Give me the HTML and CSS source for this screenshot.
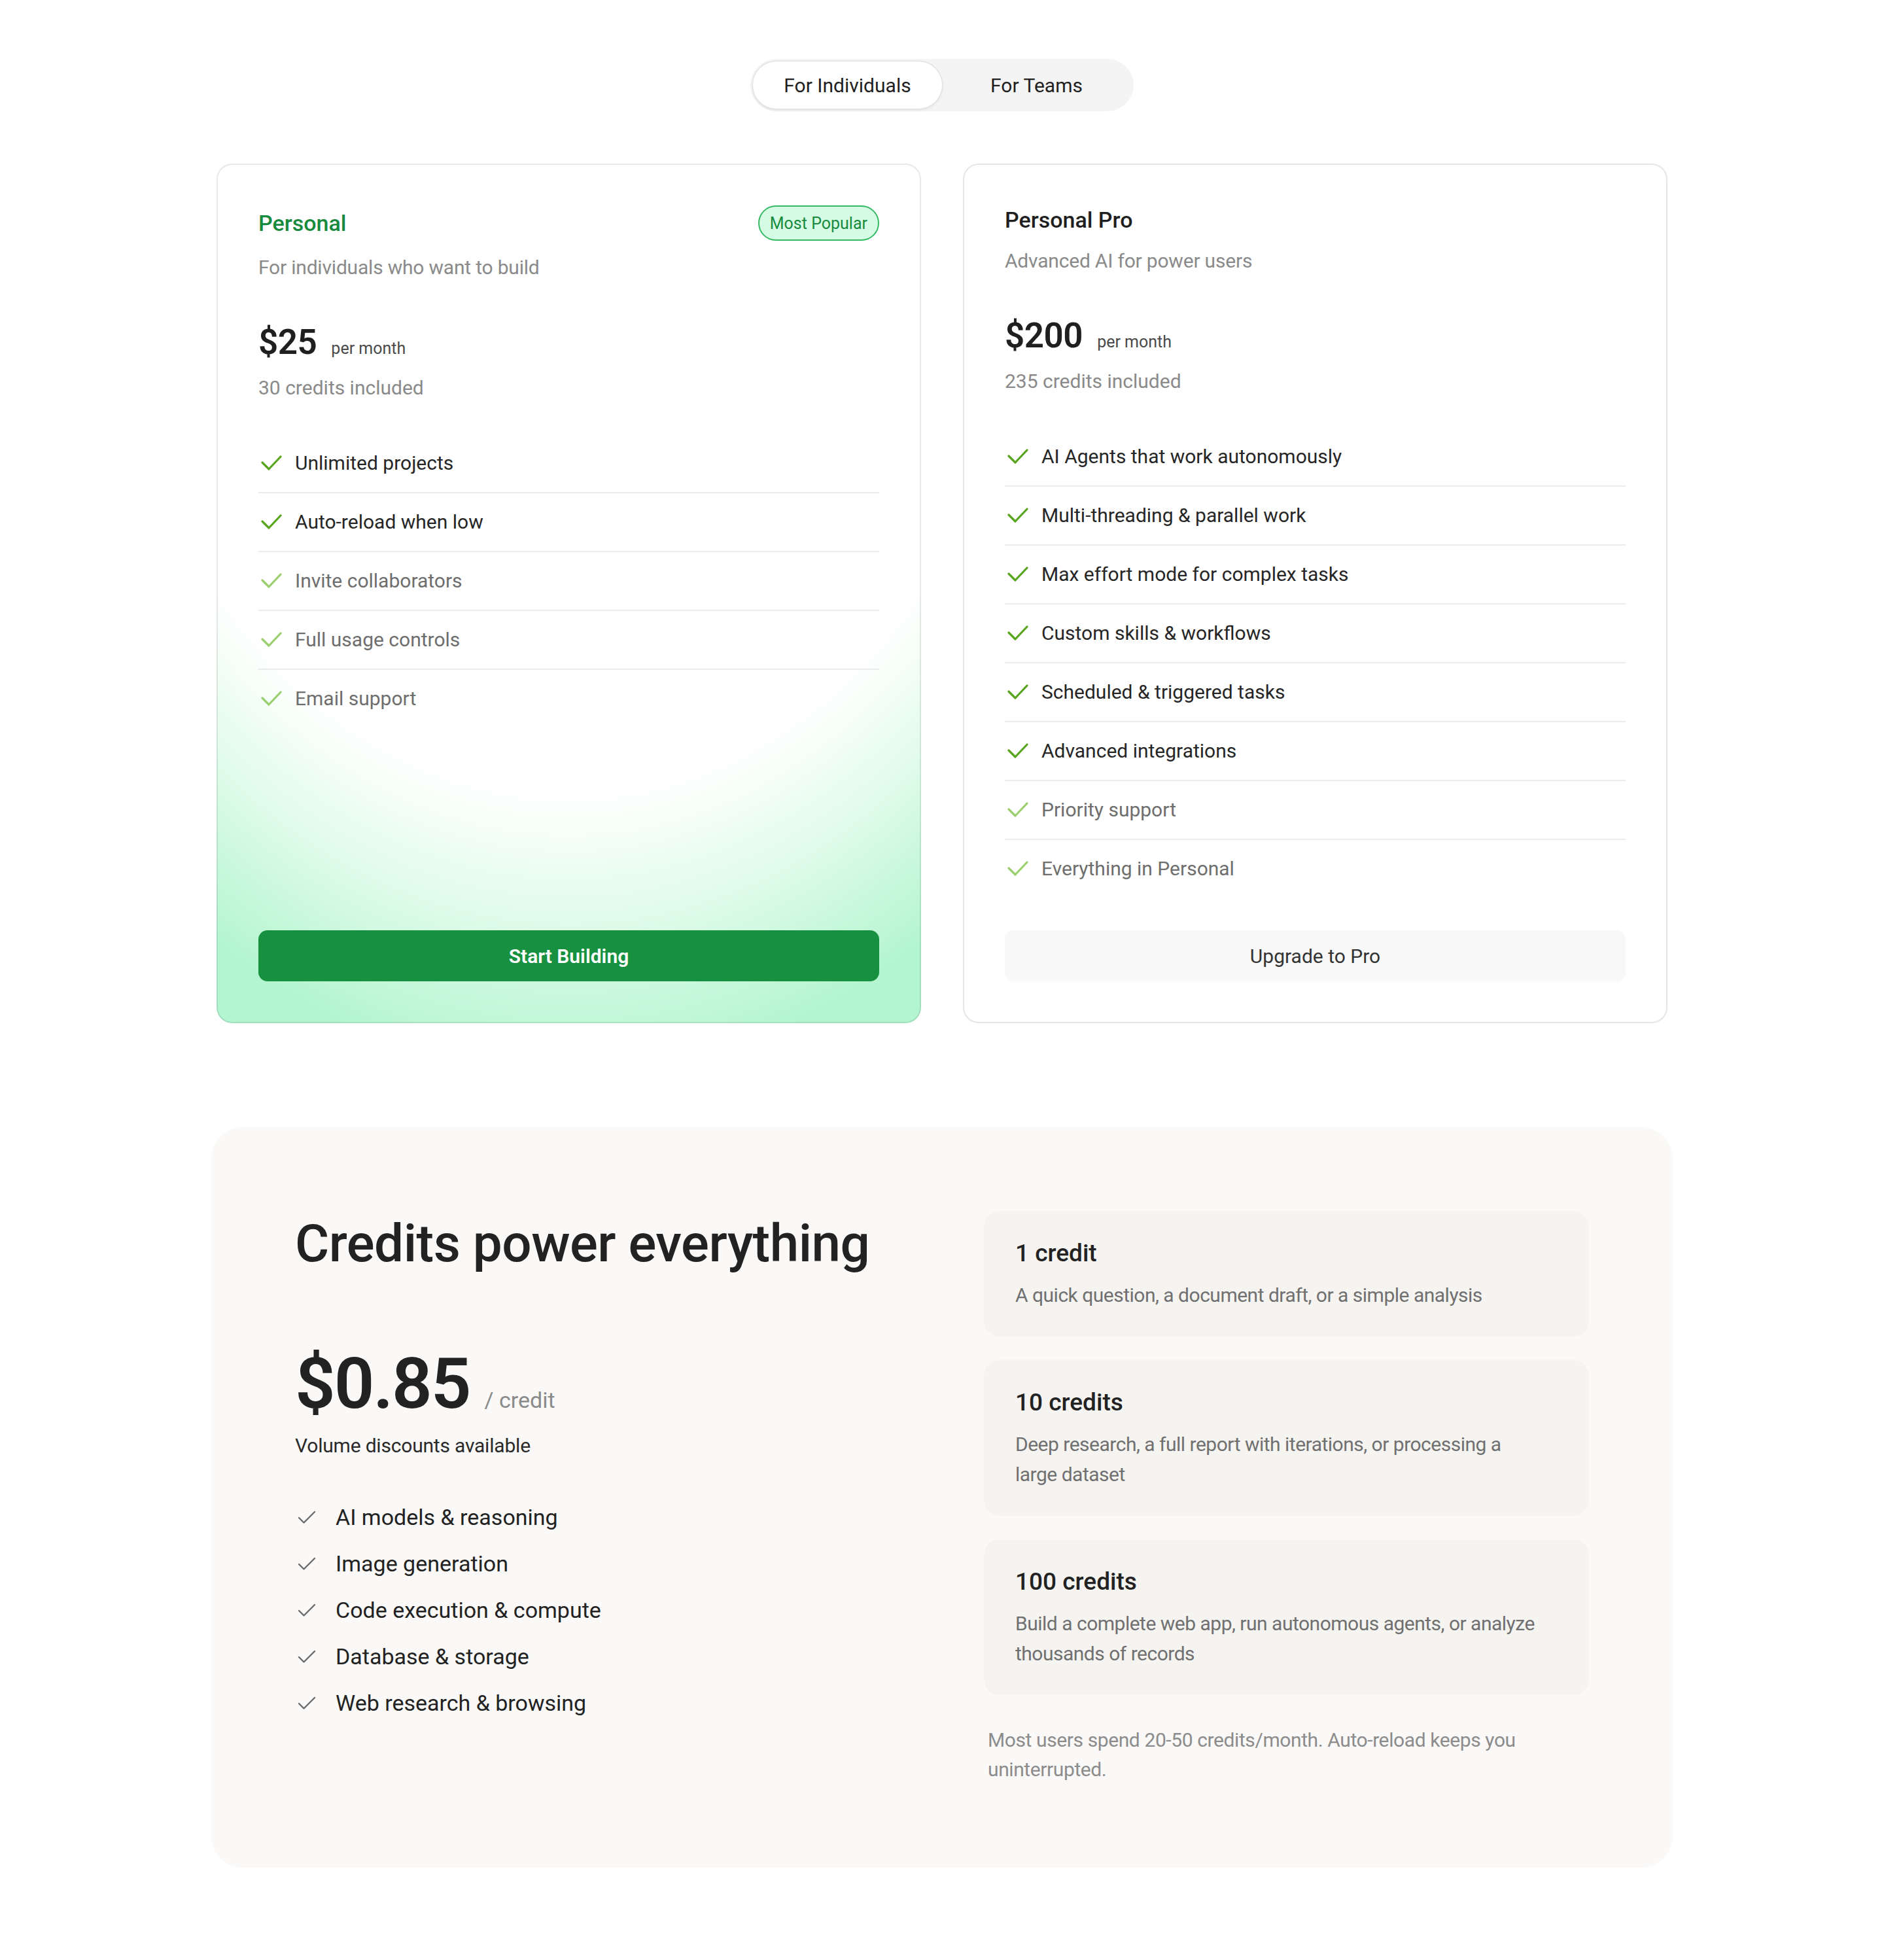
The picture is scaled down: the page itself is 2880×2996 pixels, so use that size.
FILE: index.html
```html
<!DOCTYPE html>
<html lang="en">
<head>
<meta charset="utf-8">
<title>Pricing</title>
<link rel="stylesheet" href="styles.css">
</head>
<body>
<main class="page">
  <div class="toggle-wrap">
    <div class="toggle">
      <button class="toggle-btn is-active">For Individuals</button>
      <button class="toggle-btn">For Teams</button>
    </div>
  </div>

  <section class="plans">
    <article class="plan plan-featured">
      <div class="plan-head">
        <h2 class="plan-name plan-name-green">Personal</h2>
        <span class="badge">Most Popular</span>
      </div>
      <p class="plan-sub">For individuals who want to build</p>
      <div class="price-row"><span class="price">$25</span><span class="per">per month</span></div>
      <p class="included">30 credits included</p>
      <ul class="features">
        <li class="feature"><svg class="fcheck" viewBox="0 0 36 36"><polyline points="6 17 16 27 34 8"/></svg><span>Unlimited projects</span></li>
        <li class="feature"><svg class="fcheck" viewBox="0 0 36 36"><polyline points="6 17 16 27 34 8"/></svg><span>Auto-reload when low</span></li>
        <li class="feature is-muted"><svg class="fcheck" viewBox="0 0 36 36"><polyline points="6 17 16 27 34 8"/></svg><span>Invite collaborators</span></li>
        <li class="feature is-muted"><svg class="fcheck" viewBox="0 0 36 36"><polyline points="6 17 16 27 34 8"/></svg><span>Full usage controls</span></li>
        <li class="feature is-muted"><svg class="fcheck" viewBox="0 0 36 36"><polyline points="6 17 16 27 34 8"/></svg><span>Email support</span></li>
      </ul>
      <button class="cta cta-primary">Start Building</button>
    </article>

    <article class="plan">
      <div class="plan-head">
        <h2 class="plan-name">Personal Pro</h2>
      </div>
      <p class="plan-sub">Advanced AI for power users</p>
      <div class="price-row"><span class="price">$200</span><span class="per">per month</span></div>
      <p class="included">235 credits included</p>
      <ul class="features">
        <li class="feature"><svg class="fcheck" viewBox="0 0 36 36"><polyline points="6 17 16 27 34 8"/></svg><span>AI Agents that work autonomously</span></li>
        <li class="feature"><svg class="fcheck" viewBox="0 0 36 36"><polyline points="6 17 16 27 34 8"/></svg><span>Multi-threading &amp; parallel work</span></li>
        <li class="feature"><svg class="fcheck" viewBox="0 0 36 36"><polyline points="6 17 16 27 34 8"/></svg><span>Max effort mode for complex tasks</span></li>
        <li class="feature"><svg class="fcheck" viewBox="0 0 36 36"><polyline points="6 17 16 27 34 8"/></svg><span>Custom skills &amp; workflows</span></li>
        <li class="feature"><svg class="fcheck" viewBox="0 0 36 36"><polyline points="6 17 16 27 34 8"/></svg><span>Scheduled &amp; triggered tasks</span></li>
        <li class="feature"><svg class="fcheck" viewBox="0 0 36 36"><polyline points="6 17 16 27 34 8"/></svg><span>Advanced integrations</span></li>
        <li class="feature is-muted"><svg class="fcheck" viewBox="0 0 36 36"><polyline points="6 17 16 27 34 8"/></svg><span>Priority support</span></li>
        <li class="feature is-muted"><svg class="fcheck" viewBox="0 0 36 36"><polyline points="6 17 16 27 34 8"/></svg><span>Everything in Personal</span></li>
      </ul>
      <button class="cta cta-secondary">Upgrade to Pro</button>
    </article>
  </section>

  <section class="credits">
    <div class="credits-left">
      <h2 class="credits-title">Credits power everything</h2>
      <div class="unit-row"><span class="unit-price">$0.85</span><span class="unit-label">/ credit</span></div>
      <p class="volume">Volume discounts available</p>
      <ul class="uses">
        <li class="use"><svg class="ucheck" viewBox="0 0 24 24"><polyline points="20 6 9 17 4 12"/></svg><span>AI models &amp; reasoning</span></li>
        <li class="use"><svg class="ucheck" viewBox="0 0 24 24"><polyline points="20 6 9 17 4 12"/></svg><span>Image generation</span></li>
        <li class="use"><svg class="ucheck" viewBox="0 0 24 24"><polyline points="20 6 9 17 4 12"/></svg><span>Code execution &amp; compute</span></li>
        <li class="use"><svg class="ucheck" viewBox="0 0 24 24"><polyline points="20 6 9 17 4 12"/></svg><span>Database &amp; storage</span></li>
        <li class="use"><svg class="ucheck" viewBox="0 0 24 24"><polyline points="20 6 9 17 4 12"/></svg><span>Web research &amp; browsing</span></li>
      </ul>
    </div>
    <div class="credits-right">
      <div class="tier">
        <h3 class="tier-title">1 credit</h3>
        <p class="tier-desc">A quick question, a document draft, or a simple analysis</p>
      </div>
      <div class="tier">
        <h3 class="tier-title">10 credits</h3>
        <p class="tier-desc">Deep research, a full report with iterations, or processing a large dataset</p>
      </div>
      <div class="tier">
        <h3 class="tier-title">100 credits</h3>
        <p class="tier-desc">Build a complete web app, run autonomous agents, or analyze thousands of records</p>
      </div>
      <p class="footnote">Most users spend 20-50 credits/month. Auto-reload keeps you uninterrupted.</p>
    </div>
  </section>
</main>
</body>
</html>
```

FILE: styles.css
```css
* { box-sizing: border-box; }

html, body {
  margin: 0;
  padding: 0;
  background: #ffffff;
}

body {
  font-family: "Roboto", "Inter", "Liberation Sans", sans-serif;
  color: #1f1f1f;
  -webkit-font-smoothing: antialiased;
}

h2, h3, p, ul { margin: 0; padding: 0; }
ul { list-style: none; }
button { font-family: inherit; border: 0; cursor: pointer; }

.page {
  padding: 90px 0 149px;
}

/* toggle */
.toggle-wrap {
  display: flex;
  justify-content: center;
}

.toggle {
  display: flex;
  padding: 4px;
  background: #f4f4f4;
  border-radius: 999px;
  height: 80px;
}

.toggle-btn {
  width: 289px;
  height: 72px;
  border-radius: 999px;
  background: transparent;
  font-size: 30px;
  color: #1f1f1f;
}

.toggle-btn.is-active {
  background: #ffffff;
  box-shadow: 0 0 0 1.5px #e3e3e3, 0 2px 4px rgba(0, 0, 0, 0.10);
}

/* plans */
.plans {
  width: 2218px;
  margin: 80px auto 0;
  display: grid;
  grid-template-columns: 1fr 1fr;
  gap: 64px;
}

.plan {
  display: flex;
  flex-direction: column;
  padding: 62px;
  border: 2px solid #e6e6e6;
  border-radius: 24px;
  background: #ffffff;
}

.plan-featured {
  border-color: rgba(0, 0, 0, 0.09);
  background-color: #ffffff;
  background-image: radial-gradient(ellipse 1480px 1960px at 50% 0%,
    #ffffff 0%, #ffffff 49%, #e4fcec 58%, #c9f8dc 65%, #b3f5d0 71%, #b2f5d0 100%);
  background-origin: border-box;
  background-repeat: no-repeat;
}

.plan-head {
  display: flex;
  align-items: center;
  justify-content: space-between;
}

.plan-name {
  font-size: 34px;
  line-height: 44px;
  font-weight: 500;
  color: #1f1f1f;
}

.plan-name-green { color: #178a3e; }

.badge {
  display: inline-flex;
  align-items: center;
  height: 54px;
  padding: 0 16px;
  border: 2px solid #35b963;
  border-radius: 999px;
  background: #d6fbe4;
  color: #178a3e;
  font-size: 25px;
}

.plan-sub {
  margin-top: 19px;
  font-size: 30px;
  line-height: 44px;
  color: #8a8a8a;
  letter-spacing: -0.2px;
}

.price-row {
  margin-top: 58px;
  display: flex;
  align-items: baseline;
  gap: 22px;
  line-height: 68px;
}

.price {
  font-size: 53px;
  font-weight: 600;
  color: #1f1f1f;
  letter-spacing: -0.5px;
}

.per {
  font-size: 25px;
  line-height: 1;
  color: #4a4a4a;
}

.included {
  margin-top: 14px;
  font-size: 30px;
  line-height: 44px;
  color: #8a8a8a;
}

.features {
  flex: 1;
  margin-top: 49px;
}

.feature {
  display: flex;
  align-items: center;
  gap: 20px;
  padding: 22px 0;
  font-size: 30px;
  line-height: 44px;
  color: #262626;
  border-bottom: 2px solid #ececec;
}

.feature:last-child { border-bottom: 0; }

.fcheck {
  width: 36px;
  height: 36px;
  flex: none;
  fill: none;
  stroke: #58a51d;
  stroke-width: 3.2;
  stroke-linecap: round;
  stroke-linejoin: round;
}

.feature.is-muted { color: #6e6e6e; }
.feature.is-muted .fcheck { stroke: #9bcf6d; }

.cta {
  height: 78px;
  border-radius: 14px;
  font-size: 30px;
  width: 100%;
  margin-top: 50px;
}

.cta-primary {
  background: #17913f;
  color: #ffffff;
  font-weight: 600;
}

.cta-secondary {
  background: #f8f8f8;
  color: #333333;
  box-shadow: 0 1px 2px rgba(0, 0, 0, 0.02);
}

/* credits */
.credits {
  width: 2234px;
  margin: 159px auto 0;
  padding: 128px;
  background: #faf9f7;
  border-radius: 48px;
  display: grid;
  grid-template-columns: 1fr 1fr;
  gap: 128px;
}

.credits-title {
  font-size: 80px;
  line-height: 100px;
  font-weight: 500;
  color: #222222;
  letter-spacing: -0.5px;
}

.unit-row {
  margin-top: 104px;
  display: flex;
  align-items: baseline;
  gap: 22px;
  line-height: 120px;
}

.unit-price {
  font-size: 108px;
  font-weight: 600;
  color: #222222;
  letter-spacing: -2px;
}

.unit-label {
  font-size: 34px;
  line-height: 1;
  color: #8a8a8a;
}

.volume {
  margin-top: 12px;
  font-size: 30px;
  line-height: 45px;
  color: #2a2a2a;
  letter-spacing: -0.2px;
}

.uses {
  margin-top: 62px;
  display: flex;
  flex-direction: column;
  gap: 20px;
}

.use {
  display: flex;
  align-items: center;
  gap: 26px;
  font-size: 34px;
  line-height: 51px;
  color: #222222;
}

.ucheck {
  width: 36px;
  height: 36px;
  flex: none;
  fill: none;
  stroke: #6a6a6a;
  stroke-width: 1.6;
  stroke-linecap: round;
  stroke-linejoin: round;
}

.credits-right {
  display: flex;
  flex-direction: column;
  gap: 36px;
}

.tier {
  padding: 40px 48px;
  background: #f5f4f1;
  border-radius: 24px;
}

.tier-title {
  font-size: 37px;
  line-height: 50px;
  font-weight: 500;
  color: #222222;
}

.tier-desc {
  margin-top: 16px;
  max-width: 804px;
  font-size: 30px;
  line-height: 46px;
  color: #707070;
  letter-spacing: -0.5px;
}

.footnote {
  margin-top: 10px;
  padding-left: 6px;
  font-size: 30px;
  line-height: 45px;
  color: #8c8c8c;
  letter-spacing: -0.4px;
}
```
